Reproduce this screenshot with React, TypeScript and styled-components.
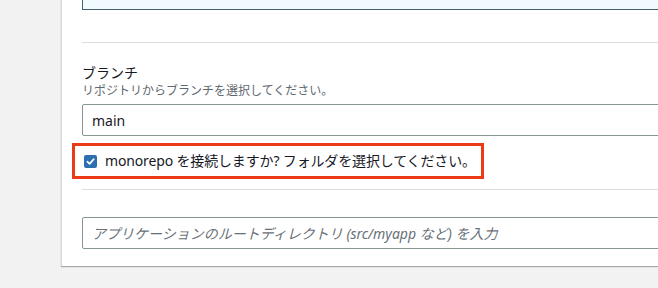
import React from 'react'
import styled, { createGlobalStyle } from 'styled-components'

const GlobalStyle = createGlobalStyle`
  html, body {
    margin: 0;
    padding: 0;
    background: #f2f2f2;
    overflow: hidden;
  }
  body {
    font-family: "Noto Sans", "Noto Sans CJK JP", sans-serif;
    color: #16191f;
  }
`

const Page = styled.div`
  width: 658px;
  height: 288px;
  overflow: hidden;
`

const Panel = styled.section`
  margin: -50px 0 0 61px;
  width: 700px;
  background: #fff;
  border-left: 1px solid #d5dbdb;
  box-shadow: 0 1px 1px rgba(0, 0, 0, 0.3);
  padding: 0 20px 17px 20px;
  box-sizing: border-box;
`

const InfoBox = styled.div`
  height: 60px;
  background: #f1faff;
  border: 1px solid #42636c;
  border-top: none;
  box-sizing: border-box;
`

const Divider = styled.hr<{ $gap: number }>`
  margin: ${p => p.$gap}px 0 0 0;
  border: none;
  border-top: 1px solid #dcdcdc;
`

const Field = styled.div<{ $gap: number }>`
  display: flex;
  flex-direction: column;
  margin-top: ${p => p.$gap}px;
`

const Label = styled.label`
  font-size: 14px;
  line-height: 20px;
  color: #16191f;
`

const Description = styled.span`
  font-size: 12px;
  line-height: 16px;
  color: #5f6870;
  margin-bottom: 5px;
`

const Input = styled.input`
  height: 32px;
  width: 100%;
  box-sizing: border-box;
  border: 1px solid #879596;
  border-radius: 2px;
  padding: 0 9px;
  font-family: inherit;
  font-size: 14px;
  color: #16191f;
  background: #fff;
  outline: none;

  &::placeholder {
    color: #687078;
    font-style: italic;
  }
`

const Highlight = styled.div`
  display: inline-flex;
  align-items: center;
  gap: 8px;
  margin: 7px 0 0 -10px;
  padding: 0 5px 0 9px;
  height: 36px;
  box-sizing: border-box;
  border: 3px solid #ec3a17;
  align-self: flex-start;
`

const CheckBox = styled.span`
  width: 13px;
  height: 13px;
  border-radius: 2px;
  background: #2e6fb0;
  display: flex;
  align-items: center;
  justify-content: center;
  flex-shrink: 0;
`

const CheckText = styled.span`
  font-size: 14px;
  line-height: 20px;
  letter-spacing: -0.15px;
  color: #16191f;
`

const Column = styled.div`
  display: flex;
  flex-direction: column;
`

const App: React.FC = () => {
  return (
    <Page>
      <GlobalStyle />
      <Panel>
        <InfoBox />
        <Divider $gap={32} />
        <Field $gap={20}>
          <Label>ブランチ</Label>
          <Description>リポジトリからブランチを選択してください。</Description>
          <Input defaultValue="main" readOnly />
        </Field>
        <Column>
          <Highlight>
            <CheckBox>
              <svg width="9" height="9" viewBox="0 0 10 10">
                <path d="M1.5 5.2 L4 7.6 L8.6 2.4" stroke="#fff" strokeWidth="1.8" fill="none" strokeLinecap="round" strokeLinejoin="round" />
              </svg>
            </CheckBox>
            <CheckText>monorepo を接続しますか? フォルダを選択してください。</CheckText>
          </Highlight>
        </Column>
        <Divider $gap={10} />
        <Field $gap={27}>
          <Input placeholder="アプリケーションのルートディレクトリ (src/myapp など) を入力" />
        </Field>
      </Panel>
    </Page>
  )
}

export default App
